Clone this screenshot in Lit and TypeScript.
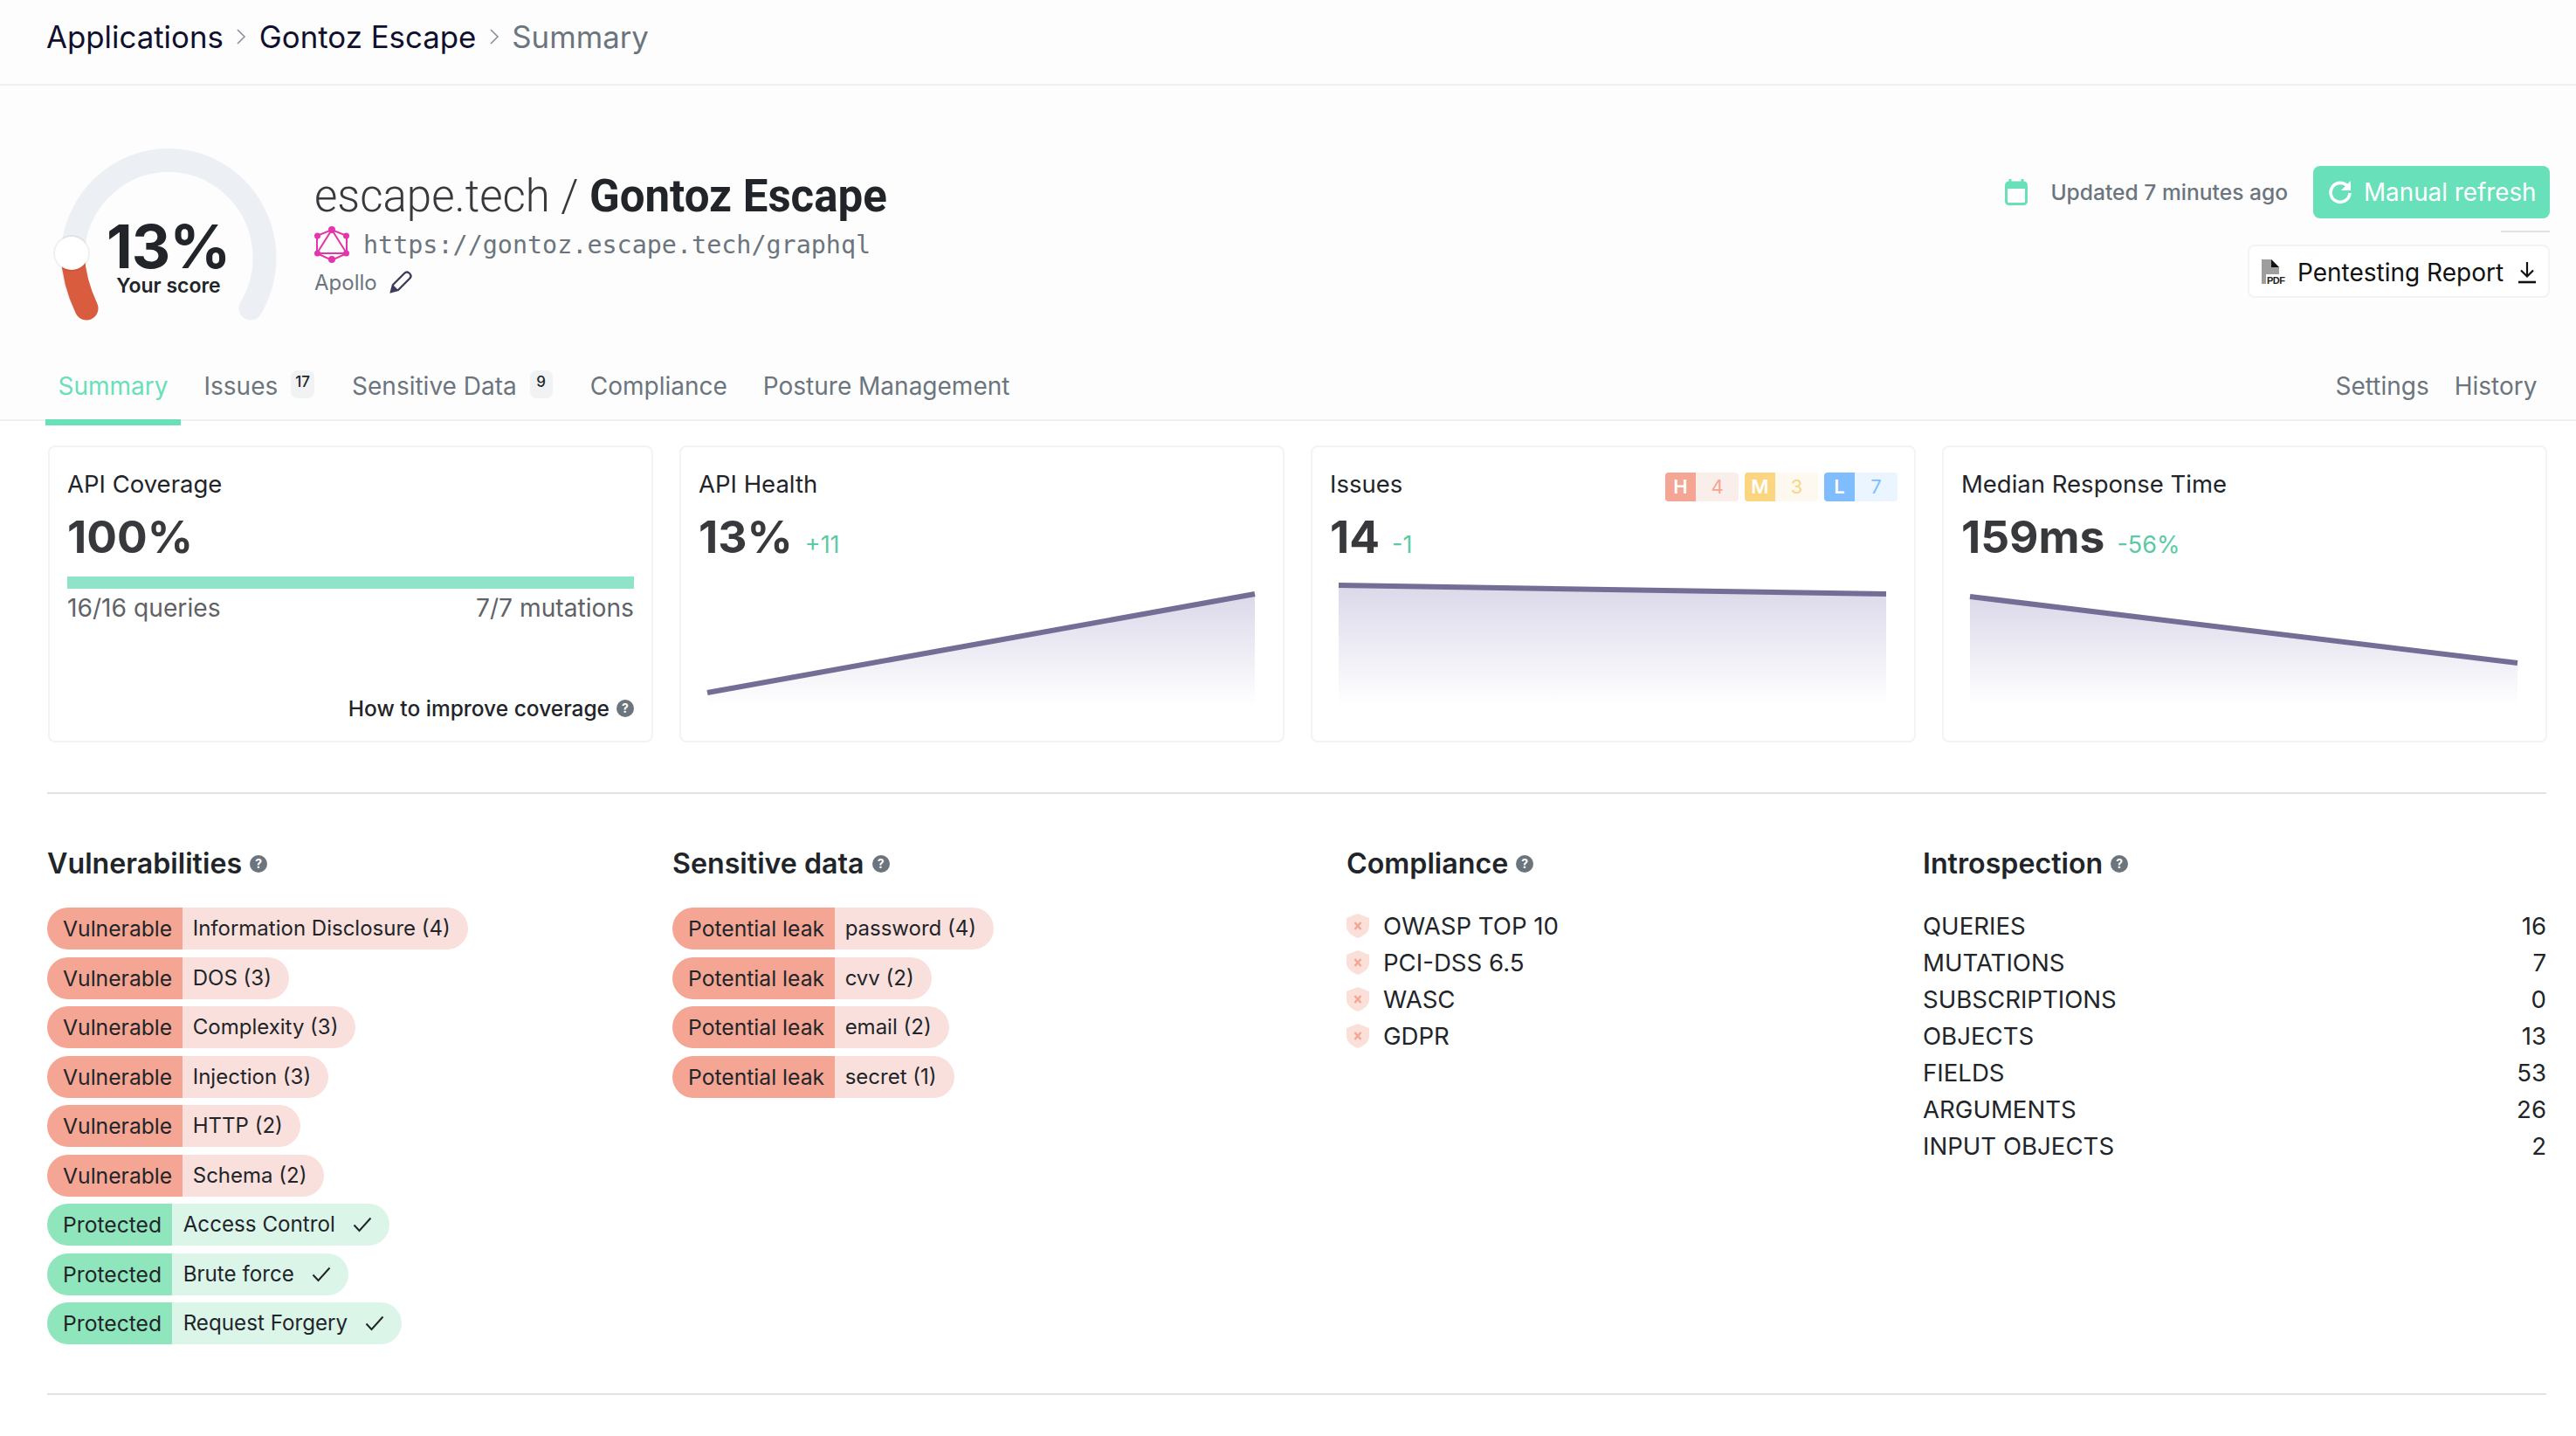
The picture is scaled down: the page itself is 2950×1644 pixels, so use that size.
import { LitElement, html, css, svg } from "lit";
import { customElement } from "lit/decorators.js";

const help = html`<span class="help">?</span>`;
const check = html`<svg class="check" width="22" height="18" viewBox="0 0 22 18"><path d="M1.5 9.5 7.5 16 20.5 1.5" fill="none" stroke="#212529" stroke-width="2"/></svg>`;
const shield = html`<svg class="shield" width="26" height="28" viewBox="0 0 26 28"><path d="M13 0 26 5V14C26 21 20 25.5 13 28 6 25.5 0 21 0 14V5Z" fill="#fbdfd9"/><path d="M9.5 10 16.5 18M16.5 10 9.5 18" stroke="#f4a593" stroke-width="2.4" fill="none"/></svg>`;

function chart(id: string, y1: number, y2: number) {
  const w = 649;
  return html`<svg class="chart" width="${w}" height="150" viewBox="0 0 ${w} 150">
    <defs><linearGradient id="${id}" x1="0" y1="0" x2="0" y2="1">
      <stop offset="0" stop-color="#6f64a8" stop-opacity=".25"/>
      <stop offset="1" stop-color="#6f64a8" stop-opacity="0"/>
    </linearGradient></defs>
    ${svg`<path d="M10 ${y1} L637 ${y2} L637 147 L10 147 Z" fill="url(#${id})"/>
    <path d="M10 ${y1} L637 ${y2}" stroke="#746e96" stroke-width="6" fill="none"/>`}
  </svg>`;
}

@customElement("app-root")
export class AppRoot extends LitElement {
  static styles = css`
    :host { display: block; width: 100%; height: 1644px; background: #fff; font-family: Inter, "Liberation Sans", sans-serif; color: #212529; overflow: hidden; }
    * { box-sizing: border-box; }
    .top { height: 98px; border-bottom: 2px solid #eff0f3; display: flex; align-items: center; padding: 0 0 12px 53px; font-size: 34.8px; color: #10102e; background: #fdfdfd; }
    .top .sep { width: 41px; display: flex; justify-content: center; }
    .top .cur { color: #6c757d; }
    .hero { height: 302px; display: flex; padding: 62px 30px 0 55px; background: #fdfdfd; }
    .gauge { position: relative; width: 280px; height: 220px; flex: none; }
    .gauge svg { display: block; }
    .gauge .pct { position: absolute; left: 67px; top: 92px; font-size: 69px; line-height: 60px; font-weight: 700; letter-spacing: -1px; color: #212529; }
    .gauge .lab { position: absolute; left: 78px; top: 155px; width: 120px; text-align: center; font-size: 23px; line-height: 24px; font-weight: 600; white-space: nowrap; }
    .info { margin-left: 25px; flex: 1; padding-top: 31px; }
    .title { font-family: Roboto, sans-serif; font-size: 51px; line-height: 67px; color: #37393d; white-space: nowrap; font-weight: 300; }
    .title b { font-weight: 700; color: #212529; }
    .url { display: flex; align-items: center; gap: 16px; height: 44px; font-family: "DejaVu Sans Mono", monospace; font-size: 28.4px; color: #6c757d; }
    .url svg { flex: none; }
    .stack { display: flex; align-items: center; gap: 14px; font-size: 24px; color: #6c757d; height: 42px; }
    .right { display: flex; flex-direction: column; align-items: flex-end; margin-top: 30px; }
    .r1 { display: flex; align-items: center; height: 60px; }
    .cal { margin-right: 26px; }
    .upd { font-size: 24.6px; font-weight: 500; color: #6c757d; margin-right: 29px; }
    .btn { height: 60px; width: 271px; border-radius: 8px; background: #68e0b9; color: #fff; font-size: 27.8px; display: flex; align-items: center; gap: 13px; padding-left: 17px; white-space: nowrap; }
    .rule { width: 56px; height: 2px; background: #dfe3e8; margin: 14px 0 14px; }
    .rep { height: 61px; width: 346px; border: 2px solid #f2f3f5; border-radius: 8px; background: #fff; color: #111; font-size: 28px; display: flex; align-items: center; padding: 2px 0 0 12px; white-space: nowrap; }
    .rep .t { margin-left: 13px; margin-right: 16px; }
    .tabs { height: 82px; display: flex; border-bottom: 2px solid #eff0f3; padding: 0 30px 0 52px; background: #fdfdfd; gap: 12px; align-items: stretch; font-size: 28px; color: #6c757d; }
    .tab { padding: 4px 14.500px 0; display: flex; align-items: center; height: 87px; border-bottom: 7px solid transparent; white-space: nowrap; gap: 15px; }
    .tab.on { color: #68e0b9; border-bottom-color: #68e0b9; }
    .tab.st { margin-right: -12px; }
    .tab .bd { font-size: 17px; font-weight: 500; color: #212529; background: #f1f2f4; border-radius: 8px; height: 32px; min-width: 26px; padding: 0 5px; display: flex; align-items: flex-start; justify-content: center; line-height: 26px; margin: -4px 2px 0 0; }
    .sp { flex: 1; }
    .cards { display: grid; grid-template-columns: repeat(4, 1fr); gap: 30px; padding: 28px 33px 0 55px; }
    .card { height: 340px; border: 2px solid #f2f3f5; border-radius: 8px; background: #fff; padding: 29px 20px 19px; display: flex; flex-direction: column; min-width: 0; }
    .chead { display: flex; justify-content: space-between; height: 33px; align-items: flex-start; }
    .ct { font-size: 27.5px; line-height: 30px; color: #212529; white-space: nowrap; margin-top: -2px; }
    .val { height: 72px; display: flex; align-items: baseline; font-size: 51.500px; line-height: 80px; font-weight: 700; color: #37393d; gap: 14px; }
    .delta { font-size: 27px; font-weight: 400; color: #5cc9a5; }
    .prog { height: 14px; background: #8fe3c8; margin-top: 14px; }
    .pl { display: flex; justify-content: space-between; font-size: 28.2px; line-height: 36px; color: #5f6267; margin-top: 4px; }
    .foot { margin-top: auto; display: flex; justify-content: flex-end; align-items: center; gap: 8px; font-size: 24.5px; line-height: 36px; font-weight: 500; color: #212529; }
    .chart { display: block; margin-top: 15px; }
    .sev { display: flex; gap: 7px; margin-right: -1px; }
    .s { display: flex; width: 84px; height: 33px; border-radius: 4px; overflow: hidden; font-size: 22px; line-height: 33px; text-align: center; }
    .s i { font-style: normal; width: 35px; color: #fff; font-weight: 600; }
    .s span { flex: 1; }
    .s.h i { background: #f4a593; } .s.h span { background: #f9eeea; color: #f4a593; }
    .s.m i { background: #fbd580; } .s.m span { background: #fdf9f0; color: #fbd580; }
    .s.l i { background: #80bdff; } .s.l span { background: #ebf5ff; color: #80bdff; }
    .lower { margin: 57px 34px 0 54px; border-top: 2px solid #dfe3e8; border-bottom: 2px solid #dfe3e8; height: 690px; display: grid; grid-template-columns: 716px 772px 660px 1fr; padding-top: 60px; align-content: start; }
    h2 { margin: 0 0 30px; height: 40px; font-size: 32.2px; line-height: 40px; font-weight: 600; color: #212529; display: flex; align-items: center; gap: 9px; white-space: nowrap; }
    .help { display: inline-flex; align-items: center; justify-content: center; width: 20px; height: 20px; border-radius: 50%; background: #6c757d; color: #fff; font-size: 14px; font-weight: 700; line-height: 1; flex: none; }
    .pills { display: flex; flex-direction: column; align-items: flex-start; gap: 8.5px; }
    .pill { display: inline-flex; height: 48px; border-radius: 24px; overflow: hidden; line-height: 48px; white-space: nowrap; }
    .pill b { font-size: 24.7px; font-weight: 400; padding: 0 11.500px 0 18px; }
    .pill span { font-size: 24px; padding: 0 20px 0 12px; display: flex; align-items: center; gap: 20px; }
    .pill.v b { background: #f4a593; } .pill.v span { background: #f9e0dc; }
    .pill.p b { background: #8fe5bc; } .pill.p span { background: #dcf5e9; padding: 0 20px 0 13px; font-size: 24.2px; }
    .rows { font-size: 27.6px; line-height: 42px; color: #212529; margin-top: 1px; }
    .comp { display: flex; align-items: center; gap: 16px; height: 42px; }
    .kv { display: flex; justify-content: space-between; height: 42px; }
  `;

  render() {
    const vul = ["Information Disclosure (4)", "DOS (3)", "Complexity (3)", "Injection (3)", "HTTP (2)", "Schema (2)"];
    return html`
      <div class="top">
        <span>Applications</span><span class="sep"><svg width="12" height="22" viewBox="0 0 12 22"><path d="M2 3 10 11 2 19" fill="none" stroke="#8a9097" stroke-width="1.6"/></svg></span>
        <span>Gontoz Escape</span><span class="sep"><svg width="12" height="22" viewBox="0 0 12 22"><path d="M2 3 10 11 2 19" fill="none" stroke="#8a9097" stroke-width="1.6"/></svg></span>
        <span class="cur">Summary</span>
      </div>
      <div class="hero">
        <div class="gauge">
          <svg width="280" height="220" viewBox="0 0 280 220">
            <path d="M44 193 A110 111.500 0 1 1 232 193" fill="none" stroke="#eceff4" stroke-width="27" stroke-linecap="round"/>
            <path d="M44 193 C34 172 29 150 28 130" fill="none" stroke="#d95c3f" stroke-width="27" stroke-linecap="round"/>
            <circle cx="27" cy="130" r="21" fill="#000" fill-opacity=".05"/>
            <circle cx="27" cy="130" r="19" fill="#fff"/>
          </svg>
          <div class="pct">13%</div>
          <div class="lab">Your score</div>
        </div>
        <div class="info">
          <div class="title">escape.tech / <b>Gontoz Escape</b></div>
          <div class="url">
            <svg width="40" height="42" viewBox="0 0 40 42"><g fill="none" stroke="#e535ab" stroke-width="2"><path d="M20 4 37 31H3Z"/><path d="M3 11V31L20 39 37 31V11L20 4 3 11Z"/></g><g fill="#e535ab"><circle cx="20" cy="4" r="4"/><circle cx="20" cy="38" r="4"/><circle cx="3.500" cy="11" r="3.500"/><circle cx="36.500" cy="11" r="3.500"/><circle cx="3.500" cy="31" r="3.500"/><circle cx="36.500" cy="31" r="3.500"/></g></svg>
            <span>https://gontoz.escape.tech/graphql</span>
          </div>
          <div class="stack"><span>Apollo</span>
            <svg width="26" height="26" viewBox="0 0 26 26"><path d="M2 24 4 16 17 3C19 1 21 1 23 3S25 7 23 9L10 22Z" fill="none" stroke="#3e3c5e" stroke-width="2.400"/><path d="M2 24 4 16 10 22Z" fill="#3e3c5e"/></svg>
          </div>
        </div>
        <div class="right">
          <div class="r1">
            <svg class="cal" width="26" height="30" viewBox="0 0 26 30"><path d="M6 0V5M20 0V5" stroke="#68e0b9" stroke-width="3"/><rect x="1.500" y="4" width="23" height="24.500" rx="3" fill="#fff" stroke="#68e0b9" stroke-width="3"/><rect x="1" y="4" width="24" height="7" fill="#68e0b9"/></svg>
            <span class="upd">Updated 7 minutes ago</span>
            <div class="btn">
              <svg width="28" height="28" viewBox="0 0 28 28"><path d="M23 8A11 11 0 1 0 25 15" fill="none" stroke="#fff" stroke-width="3.600"/><path d="M26 1V12H15Z" fill="#fff"/></svg>
              <span>Manual refresh</span>
            </div>
          </div>
          <div class="rule"></div>
          <div class="rep">
            <svg width="30" height="30" viewBox="0 0 30 30"><path d="M2 0H13L22 9V28H2Z" fill="#9e9e9e"/><path d="M13 0 22 9H13Z" fill="#111"/><rect x="7" y="17" width="23" height="13" fill="#fff"/><text x="8" y="27.500" font-family="Liberation Sans" font-size="11" font-weight="700" fill="#222" textLength="21">PDF</text></svg>
            <span class="t">Pentesting Report</span>
            <svg width="22" height="26" viewBox="0 0 22 26"><path d="M11 1V17M4 10.500 11 17.500 18 10.500" fill="none" stroke="#111" stroke-width="2.200"/><path d="M1 24H21" stroke="#111" stroke-width="2.600"/></svg>
          </div>
        </div>
      </div>
      <div class="tabs">
        <div class="tab on">Summary</div>
        <div class="tab">Issues <span class="bd">17</span></div>
        <div class="tab">Sensitive Data <span class="bd">9</span></div>
        <div class="tab">Compliance</div>
        <div class="tab">Posture Management</div>
        <div class="sp"></div>
        <div class="tab st">Settings</div>
        <div class="tab">History</div>
      </div>
      <div class="cards">
        <div class="card">
          <div class="chead"><div class="ct">API Coverage</div></div>
          <div class="val">100%</div>
          <div class="prog"></div>
          <div class="pl"><span>16/16 queries</span><span>7/7 mutations</span></div>
          <div class="foot"><span>How to improve coverage</span>${help}</div>
        </div>
        <div class="card">
          <div class="chead"><div class="ct">API Health</div></div>
          <div class="val">13% <span class="delta">+11</span></div>
          ${chart("g1", 132, 19)}
        </div>
        <div class="card">
          <div class="chead"><div class="ct">Issues</div>
            <div class="sev">
              <div class="s h"><i>H</i><span>4</span></div>
              <div class="s m"><i>M</i><span>3</span></div>
              <div class="s l"><i>L</i><span>7</span></div>
            </div>
          </div>
          <div class="val">14 <span class="delta">-1</span></div>
          ${chart("g2", 9, 19)}
        </div>
        <div class="card">
          <div class="chead"><div class="ct">Median Response Time</div></div>
          <div class="val">159ms <span class="delta">-56%</span></div>
          ${chart("g3", 22, 98)}
        </div>
      </div>
      <div class="lower">
        <div>
          <h2>Vulnerabilities ${help}</h2>
          <div class="pills">
            ${vul.map((t) => html`<div class="pill v"><b>Vulnerable</b><span>${t}</span></div>`)}
            ${["Access Control", "Brute force", "Request Forgery"].map((t) => html`<div class="pill p"><b>Protected</b><span>${t} ${check}</span></div>`)}
          </div>
        </div>
        <div>
          <h2>Sensitive data ${help}</h2>
          <div class="pills">
            ${["password (4)", "cvv (2)", "email (2)", "secret (1)"].map((t) => html`<div class="pill v"><b>Potential leak</b><span>${t}</span></div>`)}
          </div>
        </div>
        <div>
          <h2>Compliance ${help}</h2>
          <div class="rows">
            ${["OWASP TOP 10", "PCI-DSS 6.5", "WASC", "GDPR"].map((t) => html`<div class="comp">${shield}<span>${t}</span></div>`)}
          </div>
        </div>
        <div>
          <h2>Introspection ${help}</h2>
          <div class="rows">
            ${[["QUERIES", 16], ["MUTATIONS", 7], ["SUBSCRIPTIONS", 0], ["OBJECTS", 13], ["FIELDS", 53], ["ARGUMENTS", 26], ["INPUT OBJECTS", 2]].map(([k, v]) => html`<div class="kv"><span>${k}</span><span>${v}</span></div>`)}
          </div>
        </div>
      </div>
    `;
  }
}
